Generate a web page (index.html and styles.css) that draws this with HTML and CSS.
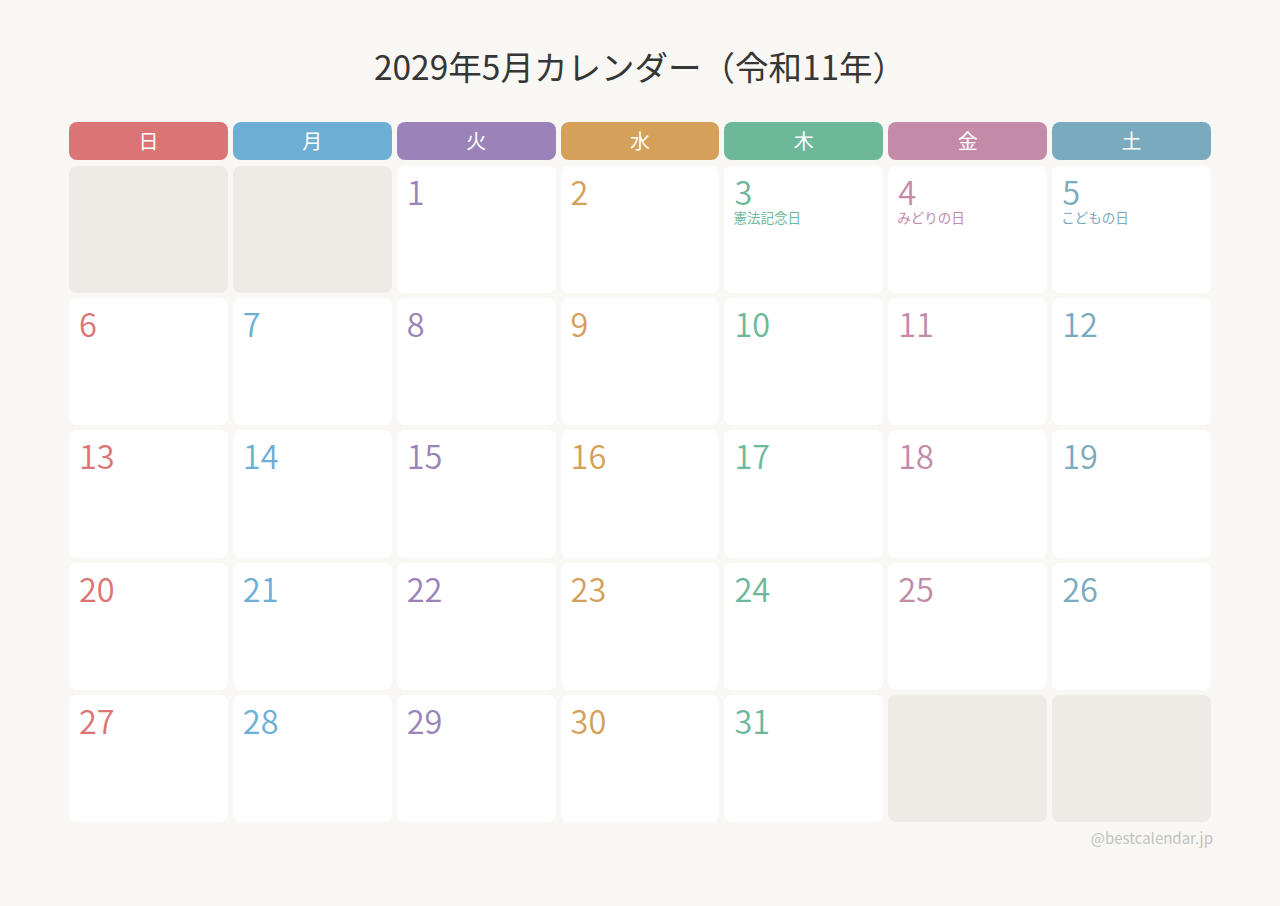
FILE: index.html
```html
<!DOCTYPE html>
<html lang="ja">
<head>
<meta charset="utf-8">
<title>2029年5月カレンダー</title>
<link rel="stylesheet" href="styles.css">
</head>
<body>
<main class="page">
  <h1 class="title">2029年5月カレンダー（令和11年）</h1>
  <div class="weekdays">
    <div class="wd sun">日</div>
    <div class="wd mon">月</div>
    <div class="wd tue">火</div>
    <div class="wd wed">水</div>
    <div class="wd thu">木</div>
    <div class="wd fri">金</div>
    <div class="wd sat">土</div>
  </div>
  <div class="grid">
    <div class="cell empty"></div>
    <div class="cell empty"></div>
    <div class="cell tue"><span class="num">1</span></div>
    <div class="cell wed"><span class="num">2</span></div>
    <div class="cell thu"><span class="num">3</span><span class="hol">憲法記念日</span></div>
    <div class="cell fri"><span class="num">4</span><span class="hol">みどりの日</span></div>
    <div class="cell sat"><span class="num">5</span><span class="hol">こどもの日</span></div>

    <div class="cell sun"><span class="num">6</span></div>
    <div class="cell mon"><span class="num">7</span></div>
    <div class="cell tue"><span class="num">8</span></div>
    <div class="cell wed"><span class="num">9</span></div>
    <div class="cell thu"><span class="num">10</span></div>
    <div class="cell fri"><span class="num">11</span></div>
    <div class="cell sat"><span class="num">12</span></div>

    <div class="cell sun"><span class="num">13</span></div>
    <div class="cell mon"><span class="num">14</span></div>
    <div class="cell tue"><span class="num">15</span></div>
    <div class="cell wed"><span class="num">16</span></div>
    <div class="cell thu"><span class="num">17</span></div>
    <div class="cell fri"><span class="num">18</span></div>
    <div class="cell sat"><span class="num">19</span></div>

    <div class="cell sun"><span class="num">20</span></div>
    <div class="cell mon"><span class="num">21</span></div>
    <div class="cell tue"><span class="num">22</span></div>
    <div class="cell wed"><span class="num">23</span></div>
    <div class="cell thu"><span class="num">24</span></div>
    <div class="cell fri"><span class="num">25</span></div>
    <div class="cell sat"><span class="num">26</span></div>

    <div class="cell sun"><span class="num">27</span></div>
    <div class="cell mon"><span class="num">28</span></div>
    <div class="cell tue"><span class="num">29</span></div>
    <div class="cell wed"><span class="num">30</span></div>
    <div class="cell thu"><span class="num">31</span></div>
    <div class="cell empty"></div>
    <div class="cell empty"></div>
  </div>
  <p class="credit">@bestcalendar.jp</p>
</main>
</body>
</html>
```

FILE: styles.css
```css
html, body {
  margin: 0;
  padding: 0;
}

body {
  background: #f8f7f3;
  font-family: "Noto Sans CJK JP", "Noto Sans", sans-serif;
  color: #333;
}

.page {
  width: 1142px;
  margin: 0 auto;
  padding-top: 46px;
}

.title {
  margin: 0 0 36px;
  font-size: 33.5px;
  line-height: 40px;
  font-weight: 400;
  text-align: center;
  color: #363636;
}

.weekdays {
  display: grid;
  grid-template-columns: repeat(7, 1fr);
  gap: 5px;
}

.wd {
  height: 38px;
  border-radius: 8px;
  display: flex;
  align-items: center;
  justify-content: center;
  color: #fff;
  font-size: 20px;
  line-height: 1;
}

.wd.sun { background: #db7474; }
.wd.mon { background: #6daed5; }
.wd.tue { background: #9b83ba; }
.wd.wed { background: #d4a05a; }
.wd.thu { background: #6cb899; }
.wd.fri { background: #c38ba8; }
.wd.sat { background: #7aaabd; }

.grid {
  margin-top: 6px;
  display: grid;
  grid-template-columns: repeat(7, 1fr);
  grid-auto-rows: 127.2px;
  gap: 5px;
}

.cell {
  background: #fff;
  border-radius: 8px;
  padding: 9px 10px 8px;
  display: flex;
  flex-direction: column;
  align-items: flex-start;
}

.cell.empty { background: #eeebe6; }

.num {
  font-size: 32.5px;
  line-height: 32px;
  font-weight: 350;
}

.hol {
  font-size: 13.5px;
  line-height: 17px;
  margin: 2px 0 0 -1px;
}

.cell.sun { color: #db7474; }
.cell.mon { color: #6daed5; }
.cell.tue { color: #9b83ba; }
.cell.wed { color: #d4a05a; }
.cell.thu { color: #6cb899; }
.cell.fri { color: #c38ba8; }
.cell.sat { color: #7aaabd; }

.credit {
  margin: 6px -2px 0 0;
  text-align: right;
  font-size: 15px;
  line-height: 20px;
  color: #c2c2c2;
}
```
